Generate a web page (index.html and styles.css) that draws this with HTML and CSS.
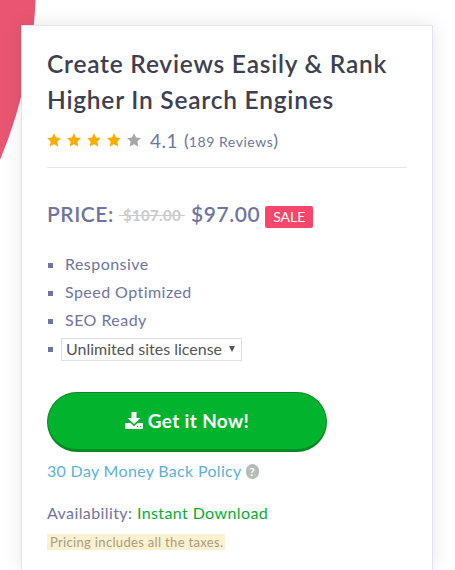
FILE: index.html
```html
<!DOCTYPE html>
<html lang="en">
<head>
    <meta charset="UTF-8">
    <meta name="viewport" content="width=device-width, initial-scale=1.0">
    <title>Create Reviews Easily</title>
    <link rel="stylesheet" href="styles.css">
</head>
<body>
  <svg class="symbols" width="0" height="0">
      <symbol id="star" viewBox="0 0 14 14">
          <path d="M7 .2 9.100 4.500l4.800.6-3.500 3.400.9 4.900L7 11.200l-4.300 2.200.9-4.900L.1 5.100l4.800-.6z"/>
      </symbol>
  </svg>
  <div class="blob"></div>
  <div class="card">
      <h1>Create Reviews Easily &amp; Rank<br>Higher In Search Engines</h1>
      <div class="rating">
          <div class="stars">
              <svg class="star"><use href="#star"/></svg>
              <svg class="star"><use href="#star"/></svg>
              <svg class="star"><use href="#star"/></svg>
              <svg class="star"><use href="#star"/></svg>
              <svg class="star off"><use href="#star"/></svg>
          </div>
          <span class="score">4.1</span>
          <span class="count">(<small>189 Reviews</small>)</span>
      </div>
      <div class="price">
          <span>PRICE:</span>
          <del>&nbsp;$107.00&nbsp;</del>
          <span class="amount">$97.00</span>
          <span class="sale">SALE</span>
      </div>
      <ul class="features">
          <li><span>Responsive</span></li>
          <li><span>Speed Optimized</span></li>
          <li><span>SEO Ready</span></li>
          <li>
              <button class="license">
                  <span>Unlimited sites license</span>
                  <svg width="6" height="6" viewBox="0 0 6 6"><path d="M0 0h6L3 6z"/></svg>
              </button>
          </li>
      </ul>
      <button class="buy">
          <svg width="18" height="18" viewBox="0 0 18 18">
              <path d="M6.500 0h5v6h4L9 12 2.500 6h4z"/>
              <path fill-rule="evenodd" d="M1 11h4.500L9 14.200 12.500 11H17q1 0 1 1v4q0 1-1 1H1q-1 0-1-1v-4q0-1 1-1zM12 14v1h1.300v-1zM15 14v1h1.300v-1z"/>
          </svg>
          <span>Get it Now!</span>
      </button>
      <div class="policy">
          <a>30 Day Money Back Policy</a>
          <span class="help">?</span>
      </div>
      <div class="availability">Availability: <span class="instant">Instant Download</span></div>
      <div class="taxes"><span>Pricing includes all the taxes.</span></div>
  </div>
</body>
</html>
```

FILE: styles.css
```css
body {
    margin: 0;
    height: 570px;
    overflow: hidden;
    position: relative;
    background: #fff;
    color: #6f759f;
    font-family: Lato, "Liberation Sans", sans-serif;
    font-size: 16px;
    font-variant-ligatures: none;
    white-space: nowrap;
}

.symbols {
    position: absolute;
}

/* big round shape behind the card */
.blob {
    position: absolute;
    left: -900px;
    top: -488px;
    width: 936px;
    height: 936px;
    border-radius: 50%;
    background: #ea5671;
}

.card {
    position: relative;
    box-sizing: border-box;
    width: 412px;
    height: 545px;
    margin: 25px 0 0 21px;
    padding: 20px 25px 0;
    border: 1px solid #e2e2f0;
    border-bottom: 0;
    background: #fff;
    box-shadow: 0 0 18px rgba(0, 0, 0, 0.1);
}

h1 {
    margin: 0;
    color: #3d4051;
    font-size: 24.5px;
    font-weight: 600;
    line-height: 36px;
    letter-spacing: 0.77px;
}

.rating {
    display: flex;
    align-items: center;
    height: 44px;
    padding-bottom: 5px;
    border-bottom: 1px solid #e6e6e8;
}

.stars {
    display: flex;
    gap: 6px;
}

.star {
    width: 14px;
    height: 14px;
    fill: #f9ae00;
}

.star.off {
    fill: #a7a7a5;
}

.score {
    margin-left: 9px;
    font-size: 19px;
    letter-spacing: 0.5px;
}

.count {
    margin-left: 6px;
    font-size: 18px;
}

.count small {
    font-size: 14px;
    letter-spacing: 0.55px;
}

.price {
    display: flex;
    align-items: center;
    height: 24px;
    margin-top: 33px;
    font-size: 21px;
    font-weight: 600;
    letter-spacing: 0.55px;
}

.price del {
    margin: 3px 0 0 5px;
    color: #cbcbcb;
    font-size: 15px;
    font-weight: 700;
    letter-spacing: 0.35px;
}

.amount {
    margin-left: 6px;
}

.sale {
    box-sizing: border-box;
    width: 48px;
    height: 22px;
    margin: 7px 0 0 5px;
    border-radius: 2px;
    background: #f6476a;
    color: #fff;
    font-size: 14px;
    font-weight: 400;
    line-height: 22px;
    letter-spacing: 0;
    text-align: center;
}

.features {
    margin: 26px 0 0;
    padding: 0;
    list-style: none;
}

.features li {
    display: flex;
    align-items: center;
    height: 28px;
}

.features li > span {
    padding-bottom: 4px;
    letter-spacing: 0.45px;
}

.features li::before {
    content: "";
    width: 5px;
    height: 5px;
    margin: 0 12px 0 1px;
    background: #6f759f;
}

.license {
    display: flex;
    align-items: center;
    justify-content: space-between;
    box-sizing: border-box;
    width: 181px;
    height: 23px;
    margin-left: -4px;
    padding: 0 6px 2px 4px;
    border: 1px solid #dfdfdf;
    background: #fff;
    color: #555;
    font: inherit;
    font-variant-ligatures: none;
}

.license svg {
    margin-top: 2px;
    fill: #555;
}

.buy {
    display: flex;
    align-items: center;
    justify-content: center;
    gap: 5px;
    box-sizing: border-box;
    width: 280px;
    height: 60px;
    margin-top: 29px;
    padding-bottom: 2px;
    border: 1px solid #078a25;
    border-bottom-width: 3px;
    border-radius: 30px;
    background: #02b32e;
    color: #fff;
    font: 700 19px Lato, sans-serif;
    letter-spacing: 0.35px;
}

.buy svg {
    fill: #fff;
}

.policy {
    display: flex;
    align-items: center;
    gap: 4px;
    height: 24px;
    margin-top: 7px;
    color: #5db2d6;
    letter-spacing: 0.32px;
}

.policy a {
    padding-bottom: 2px;
}

.help {
    width: 13px;
    height: 15px;
    border-radius: 7px;
    background: #b5bbb5;
    color: #fff;
    font-size: 12px;
    font-weight: 700;
    line-height: 15px;
    letter-spacing: 0;
    text-align: center;
}

.availability {
    margin-top: 18px;
    line-height: 24px;
    letter-spacing: 0.4px;
}

.instant {
    color: #08ac35;
}

.taxes {
    display: flex;
    margin-top: 9px;
}

.taxes span {
    box-sizing: border-box;
    width: 178px;
    height: 16px;
    padding-left: 3px;
    background: #faf1d0;
    color: #a99b83;
    font-size: 13px;
    line-height: 16px;
    letter-spacing: 0.33px;
}
```
